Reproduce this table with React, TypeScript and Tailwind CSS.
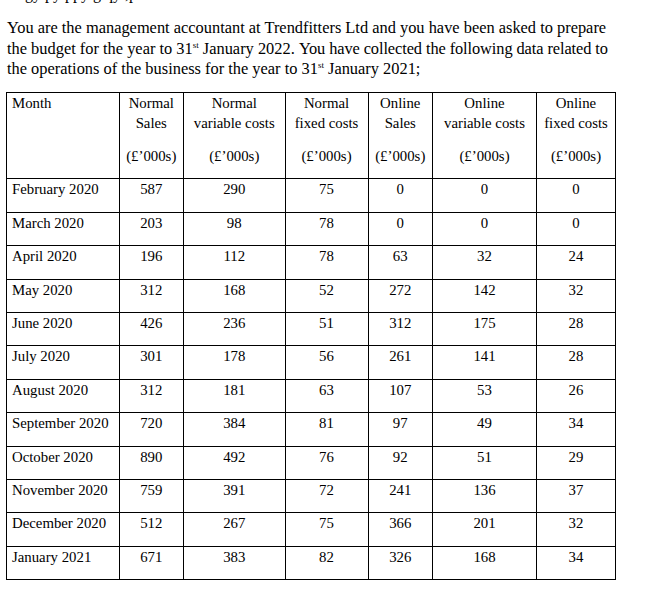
import React from "react";

const rows: [string, number, number, number, number, number, number][] = [
  ["February 2020", 587, 290, 75, 0, 0, 0],
  ["March 2020", 203, 98, 78, 0, 0, 0],
  ["April 2020", 196, 112, 78, 63, 32, 24],
  ["May 2020", 312, 168, 52, 272, 142, 32],
  ["June 2020", 426, 236, 51, 312, 175, 28],
  ["July 2020", 301, 178, 56, 261, 141, 28],
  ["August 2020", 312, 181, 63, 107, 53, 26],
  ["September 2020", 720, 384, 81, 97, 49, 34],
  ["October 2020", 890, 492, 76, 92, 51, 29],
  ["November 2020", 759, 391, 72, 241, 136, 37],
  ["December 2020", 512, 267, 75, 366, 201, 32],
  ["January 2021", 671, 383, 82, 326, 168, 34],
];

const heads: [string, string][] = [
  ["Normal", "Sales"],
  ["Normal", "variable costs"],
  ["Normal", "fixed costs"],
  ["Online", "Sales"],
  ["Online", "variable costs"],
  ["Online", "fixed costs"],
];

const serif = { fontFamily: '"Liberation Serif", "Times New Roman", serif' };

export default function App() {
  return (
    <div
      className="flex flex-col bg-white text-black min-h-[601px] w-[645px] overflow-hidden"
      style={serif}
    >
      <div className="mt-[-17px] h-[21px] pl-[25px] text-[16px] leading-[21px] whitespace-nowrap">
        gy py ppy g qy ,p
      </div>
      <p className="mt-[14px] pl-[7px] text-[16.4px] leading-[20.7px] whitespace-nowrap">
        You are the management accountant at Trendfitters Ltd and you have been asked to prepare
        <br />
        the budget for the year to 31
        <span className="relative top-[-6px] text-[9px] leading-[0]">st</span> January 2022.{" "}
        <span className="tracking-[-0.1px]">You have collected the following data related to</span>
        <br />
        the operations of the business for the year to 31
        <span className="relative top-[-6px] text-[9px] leading-[0]">st</span> January 2021;
      </p>
      <table
        className="mt-[12px] ml-[6px] w-[609px] table-fixed border-collapse text-[14.8px] leading-[20px]"
        style={serif}
      >
        <colgroup>
          <col className="w-[112.5px]" />
          <col className="w-[64.5px]" />
          <col className="w-[101.5px]" />
          <col className="w-[83px]" />
          <col className="w-[64.5px]" />
          <col className="w-[104px]" />
          <col className="w-[79px]" />
        </colgroup>
        <thead>
          <tr className="h-[86.3px]">
            <th className="border border-black align-top text-left font-normal pl-[5px] p-0" style={serif}>
              Month
            </th>
            {heads.map(([a, b], i) => (
              <th
                key={i}
                className="border border-black align-top text-center font-normal p-0 whitespace-nowrap"
                style={serif}
              >
                <div>{a}</div>
                <div>{b}</div>
                <div className="mt-[13px]">(£’000s)</div>
              </th>
            ))}
          </tr>
        </thead>
        <tbody>
          {rows.map((r) => (
            <tr key={r[0]} className="h-[33.4px]">
              <td className="border border-black align-top text-left pl-[5px] p-0 whitespace-nowrap" style={serif}>
                {r[0]}
              </td>
              {r.slice(1).map((v, i) => (
                <td key={i} className="border border-black align-top text-center p-0" style={serif}>
                  {v}
                </td>
              ))}
            </tr>
          ))}
        </tbody>
      </table>
    </div>
  );
}
